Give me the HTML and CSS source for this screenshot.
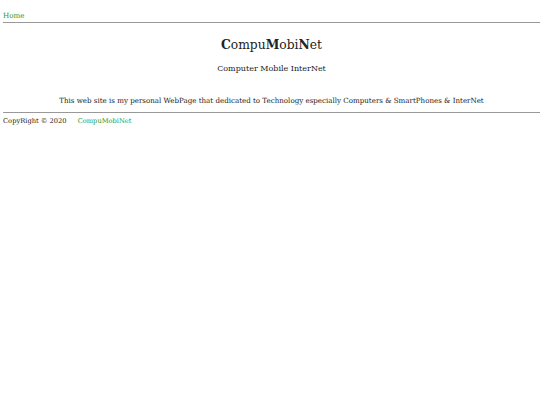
FILE: index.html
```html
<!DOCTYPE html>
<html>
<head>
<meta charset="utf-8">
<link rel="stylesheet" href="styles.css">
</head>
<body>
<nav class="nav"><a class="link" href="#">Home</a></nav>
<hr class="rule">
<header class="head">
<h1 class="title"><b>C</b>ompu<b>M</b>obi<b>N</b>et</h1>
<p class="sub">Computer Mobile InterNet</p>
</header>
<p class="intro">This web site is my personal WebPage that dedicated to Technology especially Computers &amp; SmartPhones &amp; InterNet</p>
<hr class="rule">
<footer class="foot"><span>CopyRight © 2020</span><a class="link" href="#">CompuMobiNet</a></footer>
</body>
</html>
```
FILE: styles.css
```css
html, body { margin: 0; padding: 0; background: #fff; }
body { padding: 0 0 0 3px; font-family: "DejaVu Serif", serif; color: #222; font-size: 7.1px; }
.nav { padding-top: 11px; height: 10px; }
.link { color: #2a9a2a; text-decoration: none; }
.rule { margin: 1px 0 0 0; border: 0; border-top: 1px solid #999; height: 0; }
.head { text-align: center; }
.title { font-size: 12.3px; font-weight: normal; margin: 14px 0 0 0; line-height: 16px; }
.title b { font-weight: bold; }
.sub { font-size: 8px; margin: 11px 0 0 0; }
.intro { text-align: center; margin: 23px 0 7px 0; }
.foot { padding-top: 4px; font-size: 6.7px; }
.foot span { margin-right: 11px; }
```
